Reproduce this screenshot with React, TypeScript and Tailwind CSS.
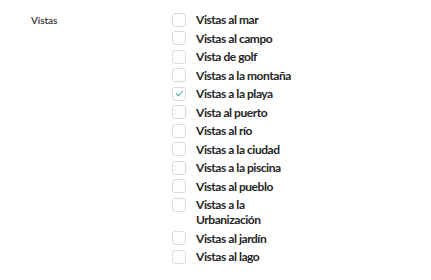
import React from 'react';

const options = [
  { label: 'Vistas al mar', checked: false },
  { label: 'Vistas al campo', checked: false },
  { label: 'Vista de golf', checked: false },
  { label: 'Vistas a la montaña', checked: false },
  { label: 'Vistas a la playa', checked: true },
  { label: 'Vista al puerto', checked: false },
  { label: 'Vistas al río', checked: false },
  { label: 'Vistas a la ciudad', checked: false },
  { label: 'Vistas a la piscina', checked: false },
  { label: 'Vistas al pueblo', checked: false },
  { label: 'Vistas a la Urbanización', checked: false },
  { label: 'Vistas al jardín', checked: false },
  { label: 'Vistas al lago', checked: false },
];

const App: React.FC = () => {
  return (
    <div className="min-h-screen bg-white flex pt-[12px] font-['Lato',sans-serif] text-[#2b2b2b]">
      <div className="w-[172px] pl-[31px] pt-[1px] text-[10px] font-semibold leading-[14px] tracking-[-0.1px] text-[#333]">
        Vistas
      </div>
      <div className="flex flex-col gap-[3.5px]">
        {options.map((opt) => (
          <label key={opt.label} className="flex items-start gap-[10px] cursor-pointer">
            <span className="w-[14px] h-[14px] mt-[0.5px] shrink-0 rounded-[3px] border border-[#dcdcdc] bg-white flex items-center justify-center">
              {opt.checked && (
                <svg width="9" height="9" viewBox="0 0 10 10" fill="none">
                  <path d="M1.5 5.2 L4 7.5 L8.5 2.5" stroke="#4aa89a" strokeWidth="1.2" strokeLinecap="round" strokeLinejoin="round" />
                </svg>
              )}
            </span>
            <span className="w-[100px] text-[12px] font-bold leading-[15px] tracking-[-0.45px] text-[#262626]">
              {opt.label}
            </span>
          </label>
        ))}
      </div>
    </div>
  );
};

export default App;
